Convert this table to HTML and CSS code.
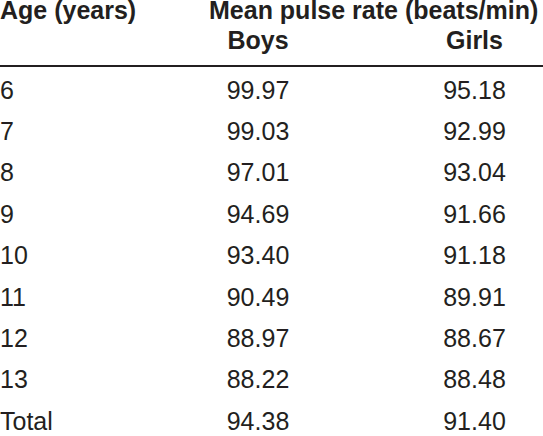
FILE: index.html
```html
<!DOCTYPE html>
<html lang="en">
<head>
<meta charset="utf-8">
<title>Mean pulse rate</title>
<link rel="stylesheet" href="styles.css">
</head>
<body>
<div class="table">
  <div class="head">
    <div class="h1 c1">Age (years)</div>
    <div class="h1 span">Mean pulse rate (beats/min)</div>
    <div class="h2 c1"></div>
    <div class="h2 c2">Boys</div>
    <div class="h2 c3">Girls</div>
  </div>
  <div class="body">
    <div class="c1">6</div><div class="c2">99.97</div><div class="c3">95.18</div>
    <div class="c1">7</div><div class="c2">99.03</div><div class="c3">92.99</div>
    <div class="c1">8</div><div class="c2">97.01</div><div class="c3">93.04</div>
    <div class="c1">9</div><div class="c2">94.69</div><div class="c3">91.66</div>
    <div class="c1">10</div><div class="c2">93.40</div><div class="c3">91.18</div>
    <div class="c1">11</div><div class="c2">90.49</div><div class="c3">89.91</div>
    <div class="c1">12</div><div class="c2">88.97</div><div class="c3">88.67</div>
    <div class="c1">13</div><div class="c2">88.22</div><div class="c3">88.48</div>
    <div class="c1">Total</div><div class="c2">94.38</div><div class="c3">91.40</div>
  </div>
</div>
</body>
</html>
```

FILE: styles.css
```css
html, body {
  margin: 0;
  padding: 0;
  background: #ffffff;
}
body {
  width: 543px;
  height: 436px;
  overflow: hidden;
  font-family: "Liberation Sans", Arial, sans-serif;
  font-size: 25px;
  color: #231f20;
}
.table {
  display: flex;
  flex-direction: column;
}
.head, .body {
  display: grid;
  grid-template-columns: 200px 116px 1fr;
}
.head {
  font-weight: bold;
  border-bottom: 2px solid #231f20;
  padding-bottom: 4px;
}
.h1 {
  height: 20px;
  line-height: 20px;
  white-space: nowrap;
}
.h2 {
  height: 41px;
  line-height: 41px;
}
.span {
  grid-column: 2 / 4;
  padding-left: 9px;
}
.body {
  padding-top: 2.6px;
  line-height: 41.4px;
}
.c1 {
  text-align: left;
}
.c2 {
  text-align: center;
}
.c3 {
  text-align: center;
  padding-left: 100px;
  padding-right: 10px;
}
```
